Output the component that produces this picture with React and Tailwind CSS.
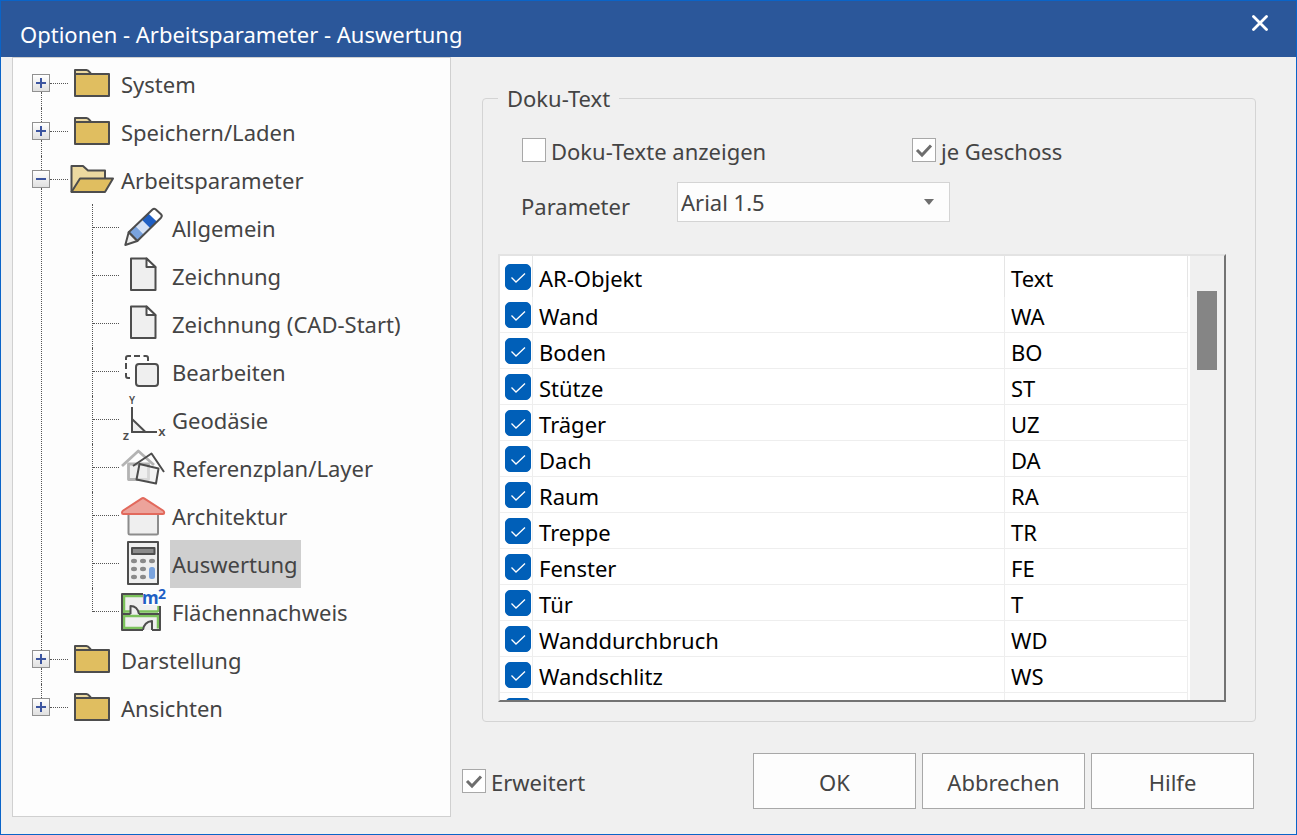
import { useState } from 'react';
import clsx from 'clsx';

const INK = '#4d4d4d';

const objects = [
  { name: 'Wand', text: 'WA' },
  { name: 'Boden', text: 'BO' },
  { name: 'Stütze', text: 'ST' },
  { name: 'Träger', text: 'UZ' },
  { name: 'Dach', text: 'DA' },
  { name: 'Raum', text: 'RA' },
  { name: 'Treppe', text: 'TR' },
  { name: 'Fenster', text: 'FE' },
  { name: 'Tür', text: 'T' },
  { name: 'Wanddurchbruch', text: 'WD' },
  { name: 'Wandschlitz', text: 'WS' },
  { name: '', text: '' },
];

const tree = [
  { label: 'System' },
  { label: 'Speichern/Laden' },
  {
    label: 'Arbeitsparameter',
    open: true,
    children: [
      { label: 'Allgemein', icon: PencilIcon },
      { label: 'Zeichnung', icon: PageIcon },
      { label: 'Zeichnung (CAD-Start)', icon: PageIcon },
      { label: 'Bearbeiten', icon: CopyIcon },
      { label: 'Geodäsie', icon: AxesIcon },
      { label: 'Referenzplan/Layer', icon: LayersIcon },
      { label: 'Architektur', icon: HouseIcon },
      { label: 'Auswertung', icon: CalculatorIcon },
      { label: 'Flächennachweis', icon: AreaIcon },
    ],
  },
  { label: 'Darstellung' },
  { label: 'Ansichten' },
];

function Icon({ children }) {
  return (
    <svg
      viewBox="0 0 44 44"
      className="h-11 w-11 shrink-0 overflow-visible"
      fill="none"
      stroke={INK}
      strokeWidth="2"
      strokeLinejoin="round"
      aria-hidden="true"
    >
      {children}
    </svg>
  );
}

function FolderIcon() {
  return (
    <Icon>
      <path d="M5 12V8h11.500c2 0 2.500 1.500 4.500 4z" fill="#ecd9a0" />
      <rect x="5" y="12" width="34" height="22" fill="#e0be60" />
    </Icon>
  );
}

function OpenFolderIcon() {
  return (
    <Icon>
      <path d="M1.500 34V8H13l5 4.500h17V20" fill="#ecd9a0" />
      <path d="M10 20.500h33L35 34H1.500z" fill="#e0be60" />
    </Icon>
  );
}

function PencilIcon() {
  return (
    <Icon>
      <path d="M7.700 26.300 31.500 3.500q1.600-1.400 3.300 0l5.200 4.800q1.600 1.600 0 3.400L16.300 35z" fill="#fff" stroke="none" />
      <path d="m7.700 26.300 6.600-6.600 8.600 8.700-6.600 6.600z" fill="#79a3de" stroke="none" />
      <path d="m14.300 19.700 6.300-6.200 8.700 8.700-6.400 6.200z" fill="#d3e0f5" stroke="none" />
      <path d="m20.600 13.500 6.500-6.200 8.900 8.500-6.700 6.400z" fill="#1f5fc4" stroke="none" />
      <path d="M7.700 26.300 31.500 3.500q1.600-1.400 3.300 0l5.200 4.800q1.600 1.600 0 3.400L16.300 35z" />
      <path d="m7.700 26.300 8.600 8.700-12 4z" fill="#efefef" />
    </Icon>
  );
}

function PageIcon() {
  return (
    <Icon>
      <path d="M10 4.500h15.500l9 9V36H10z" fill="#efefef" />
      <path d="M25.500 4.500v8.500h9z" fill="#fff" />
    </Icon>
  );
}

function CopyIcon() {
  return (
    <Icon>
      <path d="M9 28H7q-2 0-2-2v-3M5 19v-6M5 10V8q0-2 2-2h3M13 6h6M22.500 6H25q2 0 2 2v3" />
      <rect x="15" y="14" width="22" height="22" rx="3" fill="#efefef" />
    </Icon>
  );
}

function AxesIcon() {
  return (
    <Icon>
      <path d="M11 21v13h13.500z" fill="#efefef" />
      <path d="M11 9v25h25" />
      <g fill={INK} stroke="none" fontFamily="Noto Sans, sans-serif" fontWeight="600" textAnchor="middle">
        <text x="11" y="6" fontSize="10">Y</text>
        <text x="41" y="38" fontSize="13">x</text>
        <text x="5" y="42" fontSize="13">z</text>
      </g>
    </Icon>
  );
}

function LayersIcon() {
  return (
    <Icon>
      <g stroke="#b3b3b3" strokeWidth="2.800">
        <path d="M1 20 17.300 5 33 19" />
        <path d="M7.500 18h20v15.500h-20z" fill="#efefef" />
      </g>
      <path d="m12 20 18.500-12.500L43 26" strokeWidth="2" />
      <path d="m18.500 18 19 4.500-2.500 15-19.500-4z" fill="#efefef" fillOpacity=".6" strokeWidth="2" />
    </Icon>
  );
}

function HouseIcon() {
  return (
    <Icon>
      <path d="M7.500 20h29.500v19q0 1.500-1.500 1.500h-26.500q-1.500 0-1.500-1.500z" fill="#efefef" stroke="#8c8c8c" />
      <path
        d="M20.500 4.600q1.500-1 3 0L42 16.500q1.200.8 1.200 2.300 0 1.200-1.200 1.200H2.200Q1 20 1 18.800q0-1.500 1.200-2.300z"
        fill="#eca39b"
        stroke="#e2695c"
      />
    </Icon>
  );
}

function CalculatorIcon() {
  return (
    <Icon>
      <rect x="7" y="0" width="30" height="42" fill="#efefef" />
      <rect x="11" y="6" width="22.500" height="6" fill="#8a8a8a" />
      <g fill="#8a8a8a" stroke="none">
        {[19, 27, 35].map((cy) =>
          [13, 22, 31].map((cx) => <ellipse key={`${cx}-${cy}`} cx={cx} cy={cy} rx="3" ry="2.200" />)
        )}
      </g>
      <rect x="27" y="24" width="8" height="14" fill="#efefef" stroke="none" />
      <rect x="28" y="25" width="6" height="12" rx="2.500" fill="#79a3de" stroke="none" />
    </Icon>
  );
}

function AreaIcon() {
  return (
    <Icon>
      <path d="M1 4h38v36H1z" fill="#efefef" stroke="none" />
      <g stroke="#7cc25c" strokeWidth="2.500">
        <path d="M22 6H3v33M3 21.500h6M18 21.500h19M3 26h34v12.500M3 38h19M37.500 16v6" />
      </g>
      <path d="M22 4H1v36h21M31 40h8V16M1 24h8.500M18 24h21" />
      <path d="M9.500 24v-8q7 0 8.500 8M31 40v-9q-8 1-9 9" />
      <path d="M22 1h22v14H22z" fill="#fdfdfd" stroke="none" />
      <g fill="#1f5fc4" stroke="none" fontFamily="Noto Sans, sans-serif" fontWeight="700">
        <text x="21" y="14" fontSize="17">m</text>
        <text x="37" y="9" fontSize="14">2</text>
      </g>
    </Icon>
  );
}

function Toggle({ open, label }) {
  return (
    <button
      type="button"
      aria-label={label}
      aria-expanded={open}
      className="flex h-[18px] w-[18px] shrink-0 items-center justify-center border border-[#919191] bg-linear-to-b from-white to-[#e0e0e0]"
    >
      <svg viewBox="0 0 10 10" className="h-2.5 w-2.5" stroke="#3c55a0" strokeWidth="2" aria-hidden="true">
        <path d={open ? 'M0 5h10' : 'M0 5h10M5 0v10'} />
      </svg>
    </button>
  );
}

function TreeChild({ item, last, selected, onSelect }) {
  const ItemIcon = item.icon;
  return (
    <li className="flex h-12">
      <span className={clsx('border-l border-dotted border-[#555]', last ? 'h-6' : 'h-12')} />
      <span className="mt-[23px] w-[26px] border-t border-dotted border-[#555]" />
      <button type="button" onClick={() => onSelect(item.label)} className="ml-0.5 flex h-12 items-center gap-[5px]">
        <ItemIcon />
        <span className={clsx('flex h-12 items-center pl-0.5 pr-[3px]', selected && 'bg-[#cfcfcf]')}>
          {item.label}
        </span>
      </button>
    </li>
  );
}

function TreeNode({ item, first, last, selected, onSelect }) {
  return (
    <li className="flex">
      <div className="flex w-[18px] flex-col items-center">
        <span className={clsx('h-3.5 border-l border-dotted', first ? 'border-transparent' : 'border-[#555]')} />
        <Toggle open={!!item.open} label={item.label} />
        {!last && <span className="flex-1 border-l border-dotted border-[#555]" />}
      </div>
      <div>
        <div className="flex h-12">
          <span className="mt-[23px] w-[18px] border-t border-dotted border-[#555]" />
          <button type="button" className="ml-0.5 flex items-center gap-[7px]">
            {item.open ? <OpenFolderIcon /> : <FolderIcon />}
            {item.label}
          </button>
        </div>
        {item.children && (
          <ul className="ml-[42px]">
            {item.children.map((child, i) => (
              <TreeChild
                key={child.label}
                item={child}
                last={i === item.children.length - 1}
                selected={child.label === selected}
                onSelect={onSelect}
              />
            ))}
          </ul>
        )}
      </div>
    </li>
  );
}

function Checkbox({ id, label, checked, onChange }) {
  return (
    <div className="flex items-center gap-[5px]">
      <span className="grid place-items-center">
        <input
          id={id}
          type="checkbox"
          checked={checked}
          onChange={onChange}
          className="col-start-1 row-start-1 h-6 w-6 appearance-none border border-[#a8a8a8] bg-white"
        />
        {checked && (
          <svg
            viewBox="0 0 24 24"
            className="pointer-events-none col-start-1 row-start-1 h-6 w-6"
            fill="none"
            stroke="#6e6e6e"
            strokeWidth="3"
            aria-hidden="true"
          >
            <path d="m5 12 5 5 9-9.500" />
          </svg>
        )}
      </span>
      <label htmlFor={id} className="pt-0.5">
        {label}
      </label>
    </div>
  );
}

function BlueCheckbox({ label, checked, onChange }) {
  return (
    <span className="grid h-[26px] w-[26px] place-items-center">
      <input
        type="checkbox"
        aria-label={label}
        checked={checked}
        onChange={onChange}
        className="col-start-1 row-start-1 h-[26px] w-[26px] appearance-none rounded-[5px] border border-[#8a8a8a] bg-white checked:border-[#005fb8] checked:bg-[#005fb8]"
      />
      <svg
        viewBox="0 0 26 26"
        className="pointer-events-none col-start-1 row-start-1 h-[26px] w-[26px]"
        fill="none"
        stroke="#fff"
        strokeWidth="1.300"
        aria-hidden="true"
      >
        <path d="m6.500 13.500 4.500 4.500 9-8.500" />
      </svg>
    </span>
  );
}

function DialogButton({ children }) {
  return (
    <button type="button" className="h-14 w-[163px] border border-[#a8a8a8] bg-[#fdfdfd] pt-0.5">
      {children}
    </button>
  );
}

export default function App() {
  const [selected, setSelected] = useState('Auswertung');
  const [showTexts, setShowTexts] = useState(false);
  const [perFloor, setPerFloor] = useState(true);
  const [extended, setExtended] = useState(true);
  const [checked, setChecked] = useState(objects.map(() => true));

  const allChecked = checked.every(Boolean);
  const toggleAll = () => setChecked(objects.map(() => !allChecked));
  const toggleOne = (index) => setChecked(checked.map((c, i) => (i === index ? !c : c)));

  return (
    <div className="flex h-screen flex-col border border-[#0a64c8] bg-[#f0f0f0] font-['Segoe_UI','Noto_Sans',sans-serif] text-[22px] leading-8 text-[#444]">
      <header className="flex h-14 shrink-0 items-start justify-between bg-[#2b579a] pl-[19px] pr-7 text-white">
        <h1 className="pt-[17px]">Optionen - Arbeitsparameter - Auswertung</h1>
        <button type="button" aria-label="Schließen" className="mt-3.5">
          <svg viewBox="0 0 16 16" className="h-4 w-4" stroke="#fff" strokeWidth="2.800" strokeLinecap="round" aria-hidden="true">
            <path d="m1.500 1.500 13 13M14.500 1.500l-13 13" />
          </svg>
        </button>
      </header>

      <div className="flex min-h-0 flex-1">
        {/* Navigation tree */}
        <nav className="mb-[17px] ml-[11px] w-[439px] shrink-0 border border-[#d0d0d0] bg-[#fdfdfd] pl-[19px] pt-0.5">
          <ul>
            {tree.map((item, i) => (
              <TreeNode
                key={item.label}
                item={item}
                first={i === 0}
                last={i === tree.length - 1}
                selected={selected}
                onSelect={setSelected}
              />
            ))}
          </ul>
        </nav>

        <main className="flex min-w-0 flex-1 flex-col pb-[25px] pl-[11px] pr-[42px] pt-[25px]">
          <fieldset className="ml-5 mr-[-2px] flex min-h-0 flex-1 flex-col rounded border border-[#d4d4d4] pb-[19px] pl-[15px] pr-[29px]">
            <legend className="px-[9px]">Doku-Text</legend>

            <div className="grid grid-cols-[390px_1fr] pl-6 pt-[19px]">
              <Checkbox
                id="doku-texte"
                label="Doku-Texte anzeigen"
                checked={showTexts}
                onChange={() => setShowTexts(!showTexts)}
              />
              <Checkbox
                id="je-geschoss"
                label="je Geschoss"
                checked={perFloor}
                onChange={() => setPerFloor(!perFloor)}
              />
            </div>

            <div className="mt-[15px] flex items-end pl-[23px]">
              <label htmlFor="parameter" className="w-[156px]">
                Parameter
              </label>
              <div className="grid w-[273px] items-center">
                <select
                  id="parameter"
                  className="col-start-1 row-start-1 h-10 w-full appearance-none border border-[#d4d4d4] bg-[#fdfdfd] pl-[3px]"
                >
                  <option>Arial 1.5</option>
                </select>
                <svg
                  viewBox="0 0 10 6"
                  className="pointer-events-none col-start-1 row-start-1 mr-4 h-1.5 w-2.5 justify-self-end"
                  fill="#6e6e6e"
                  aria-hidden="true"
                >
                  <path d="M0 0h10L5 6z" />
                </svg>
              </div>
            </div>

            {/* Object list */}
            <div className="mt-8 flex min-h-0 flex-1 overflow-hidden border-2 border-b-[#737373] border-l-[#e3e3e3] border-r-[#737373] border-t-[#e3e3e3] bg-white text-black">
              <div className="min-w-0 flex-1 overflow-hidden pr-0.5">
                <table className="w-full table-fixed border-separate border-spacing-0">
                  <thead>
                    <tr className="h-[41px]">
                      <th className="w-[33px] border-r border-[#e5e5e5] pl-[5px]">
                        <BlueCheckbox label="AR-Objekt" checked={allChecked} onChange={toggleAll} />
                      </th>
                      <th className="border-r border-[#e5e5e5] pl-1.5 pt-0.5 text-left font-normal">AR-Objekt</th>
                      <th className="w-[183px] border-r border-[#e5e5e5] pl-1.5 pt-0.5 text-left font-normal">Text</th>
                    </tr>
                  </thead>
                  <tbody>
                    {objects.map((object, i) => (
                      <tr key={i} className="h-9">
                        <td className="border-b border-r border-[#eee] pl-[5px]">
                          <BlueCheckbox
                            label={object.name || 'AR-Objekt'}
                            checked={checked[i]}
                            onChange={() => toggleOne(i)}
                          />
                        </td>
                        <td className="border-b border-r border-[#eee] pl-1.5 pt-0.5">{object.name}</td>
                        <td className="border-b border-r border-[#eee] pl-1.5 pt-0.5">{object.text}</td>
                      </tr>
                    ))}
                  </tbody>
                </table>
              </div>
              <div className="w-[34px] shrink-0 bg-[#f0f0f0] pt-[35px]">
                <div className="mx-auto h-[79px] w-5 bg-[#858585]" />
              </div>
            </div>
          </fieldset>

          <div className="mt-[31px] flex shrink-0 items-center">
            <Checkbox
              id="erweitert"
              label="Erweitert"
              checked={extended}
              onChange={() => setExtended(!extended)}
            />
            <div className="ml-auto flex gap-1.5">
              <DialogButton>OK</DialogButton>
              <DialogButton>Abbrechen</DialogButton>
              <DialogButton>Hilfe</DialogButton>
            </div>
          </div>
        </main>
      </div>
    </div>
  );
}
